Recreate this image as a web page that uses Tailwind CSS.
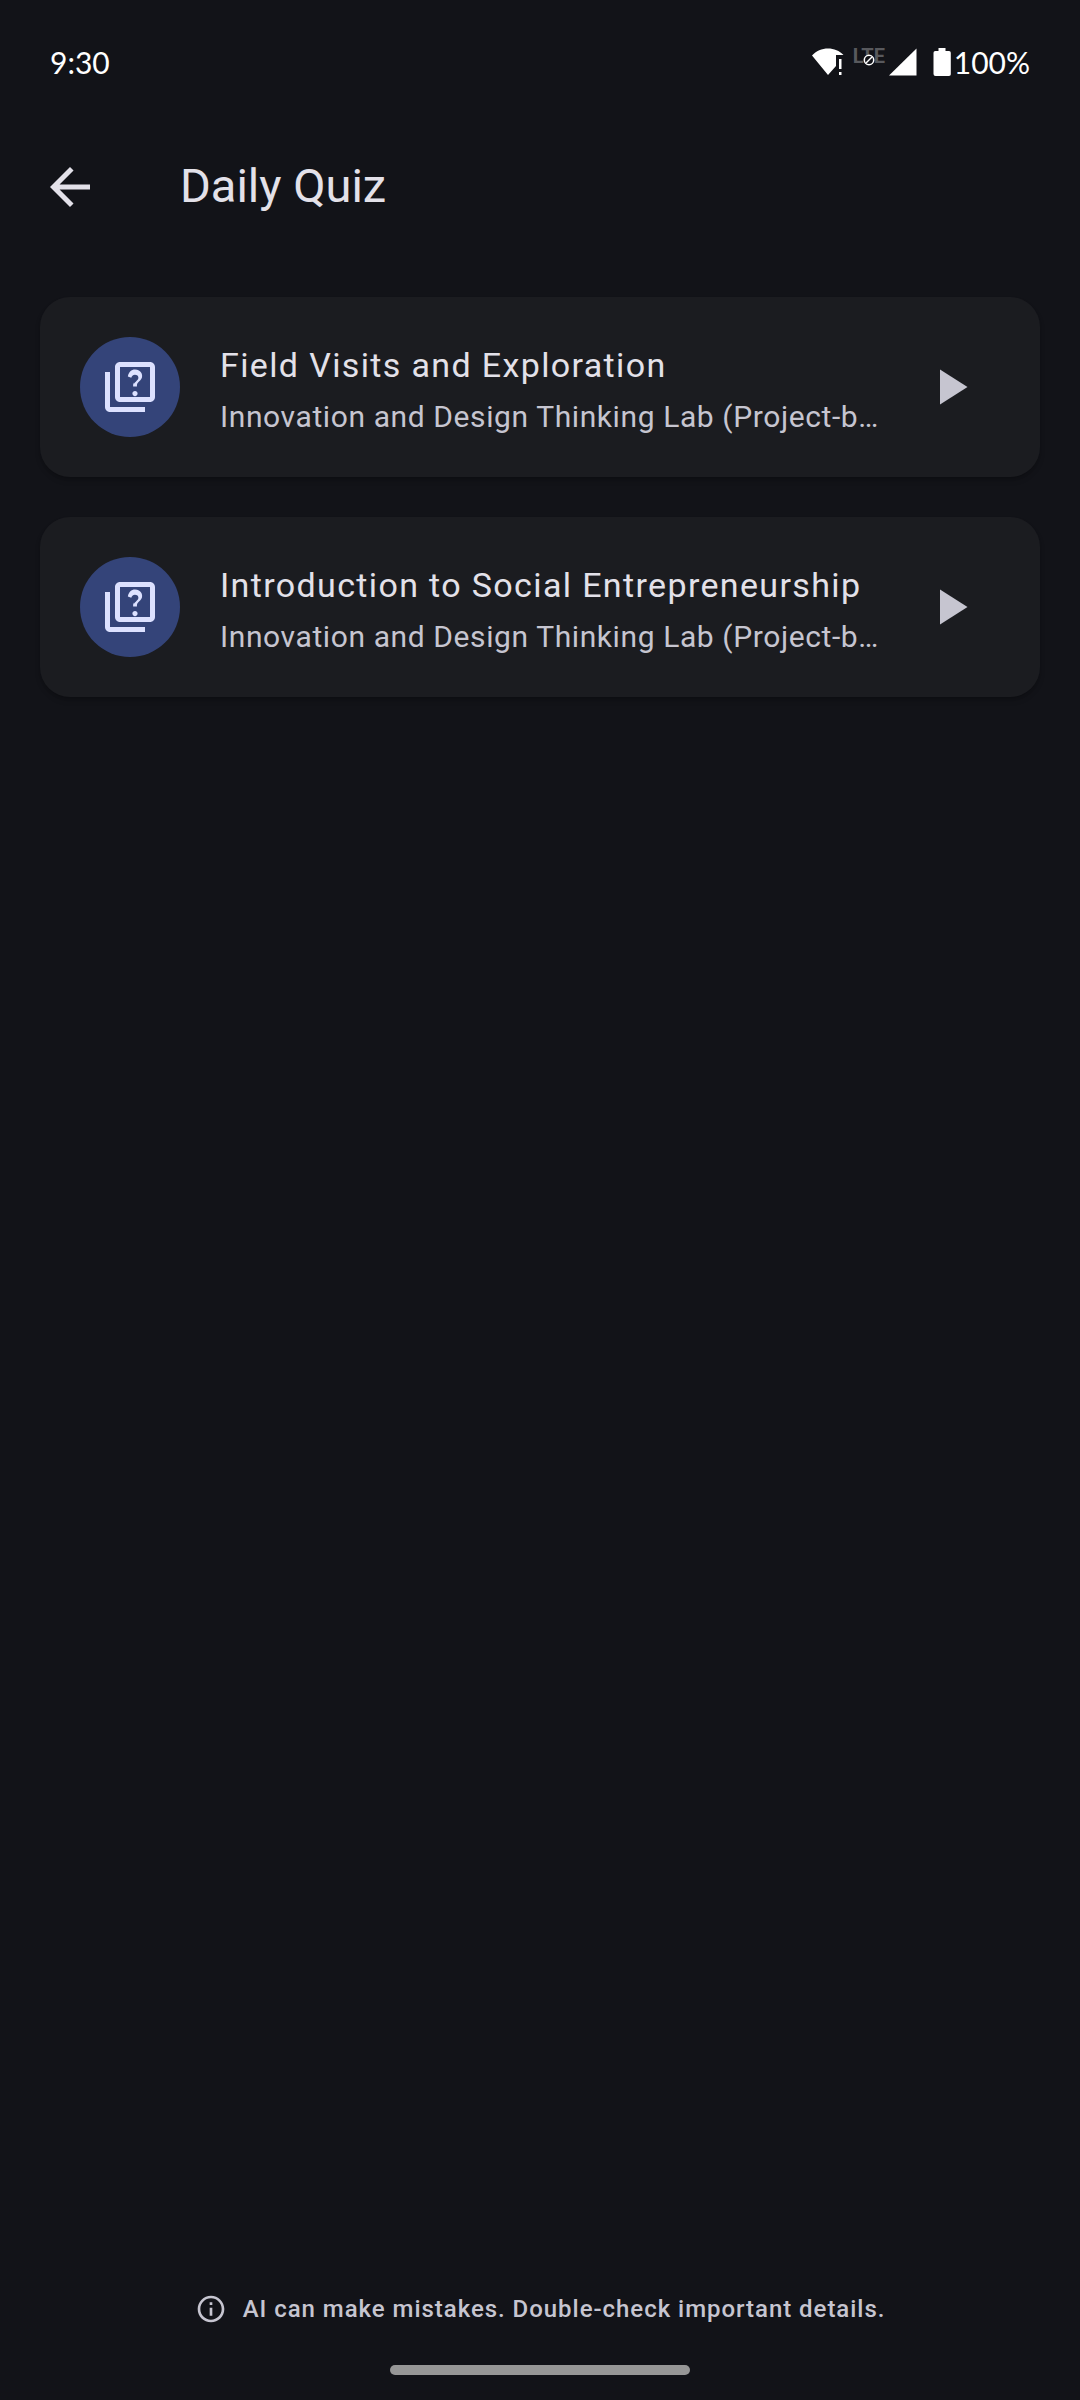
<!DOCTYPE html>
<html lang="en">

<head>
  <meta charset="UTF-8">
  <meta name="viewport" content="width=device-width, initial-scale=1.0">
  <title>Daily Quiz</title>
  <script src="https://cdn.jsdelivr.net/npm/@tailwindcss/browser@4"></script>
</head>

<body class="flex flex-col min-h-screen bg-[#121318] text-[#e3e1e9] font-['Roboto',sans-serif]">
  <!-- Status bar -->
  <div class="flex items-center justify-between h-[124px] px-[50px] text-white text-3xl font-['Lato',sans-serif]">
    <span>9:30</span>
    <div class="flex items-center">
      <svg class="w-8 h-7" viewBox="0 0 32 28" fill="currentColor" aria-label="Wi-Fi, no internet">
        <path d="M0 7.500C4 3 10 .5 16 .5s11.500 2.200 15.500 6.500H24v11L16 27z" />
        <path d="M27 11h2.500v10H27zM27 24h2.500v3H27z" />
      </svg>
      <div class="relative ml-[9px] w-8 h-7 text-xl leading-4 font-bold text-[#58595d] font-['Roboto',sans-serif]">
        <span>LTE</span>
        <svg class="absolute left-[10px] top-[6px] w-3 h-3 text-white" viewBox="0 0 12 12" fill="none" stroke="currentColor" stroke-width="1.500" aria-hidden="true">
          <circle cx="6" cy="6" r="4.700" fill="#121318" />
          <path d="M3 9l6-6" />
        </svg>
      </div>
      <svg class="ml-1 w-7 h-7" viewBox="0 0 28 28" fill="currentColor" aria-label="Signal">
        <path d="M27.500 .5v27H0z" />
      </svg>
      <svg class="ml-4 w-[18px] h-7" viewBox="0 0 18 28" fill="currentColor" aria-label="Battery">
        <path d="M5.500 0h7v3H16a1.800 1.800 0 0 1 1.800 1.800v21A2 2 0 0 1 16 28H2.500a2 2 0 0 1-2-2V4.800A1.800 1.800 0 0 1 2.300 3h3.200z" />
      </svg>
      <span class="ml-[3px]">100%</span>
    </div>
  </div>

  <!-- App bar -->
  <header class="flex items-center gap-20 h-[125px] px-10">
    <button type="button" aria-label="Back">
      <svg class="w-[60px] h-[60px]" viewBox="0 0 24 24" fill="currentColor">
        <path d="M20 11H7.830l5.590-5.590L12 4l-8 8 8 8 1.410-1.410L7.830 13H20v-2z" />
      </svg>
    </button>
    <h1 class="text-[47px]">Daily Quiz</h1>
  </header>

  <!-- Quiz list -->
  <main class="flex-1 px-10 pt-12">
    <ul class="space-y-10">
      <li class="flex items-center min-h-[180px] px-10 py-9 rounded-[30px] bg-[#1b1c20] shadow-md shadow-black/20">
        <div class="flex items-center justify-center shrink-0 w-[100px] h-[100px] rounded-full bg-[#344479] text-[#dce1ff]">
          <svg class="w-[60px] h-[60px]" viewBox="0 0 24 24" fill="currentColor" aria-hidden="true">
            <path d="M4 6H2v14c0 1.100.9 2 2 2h14v-2H4V6zm16-4H8c-1.100 0-2 .9-2 2v12c0 1.100.9 2 2 2h12c1.100 0 2-.9 2-2V4c0-1.100-.9-2-2-2zm0 14H8V4h12v12zm-6.490-5.160c.41-.73 1.180-1.160 1.630-1.800.48-.68.21-1.940-1.140-1.940-.88 0-1.320.67-1.500 1.230l-1.370-.57C11.510 5.960 12.520 5 13.990 5c1.230 0 2.080.56 2.510 1.260.37.6.58 1.730.01 2.570-.63.93-1.230 1.210-1.560 1.810-.13.24-.18.4-.18 1.180h-1.520c.01-.41-.06-1.080.26-1.650zm-.56 3.790c0-.59.47-1.040 1.050-1.040.59 0 1.040.45 1.040 1.040 0 .58-.44 1.050-1.040 1.050-.58 0-1.050-.47-1.050-1.050z" />
          </svg>
        </div>
        <div class="flex-1 min-w-0 ml-10 mr-4 pt-1">
          <h2 class="truncate text-[34px] leading-[52px] tracking-[0.04em]">Field Visits and Exploration</h2>
          <p class="truncate mt-1 text-3xl leading-[44px] tracking-[0.02em] text-[#c6c5d0]">Innovation and Design Thinking Lab (Project-based)</p>
        </div>
        <button type="button" class="flex items-center justify-center shrink-0 w-[100px] h-[100px] text-[#c6c5d0]" aria-label="Start quiz">
          <svg class="w-[60px] h-[60px]" viewBox="0 0 24 24" fill="currentColor">
            <path d="M8 5v14l11-7z" />
          </svg>
        </button>
      </li>
      <li class="flex items-center min-h-[180px] px-10 py-9 rounded-[30px] bg-[#1b1c20] shadow-md shadow-black/20">
        <div class="flex items-center justify-center shrink-0 w-[100px] h-[100px] rounded-full bg-[#344479] text-[#dce1ff]">
          <svg class="w-[60px] h-[60px]" viewBox="0 0 24 24" fill="currentColor" aria-hidden="true">
            <path d="M4 6H2v14c0 1.100.9 2 2 2h14v-2H4V6zm16-4H8c-1.100 0-2 .9-2 2v12c0 1.100.9 2 2 2h12c1.100 0 2-.9 2-2V4c0-1.100-.9-2-2-2zm0 14H8V4h12v12zm-6.490-5.160c.41-.73 1.180-1.160 1.630-1.800.48-.68.21-1.940-1.140-1.940-.88 0-1.320.67-1.500 1.230l-1.370-.57C11.510 5.960 12.520 5 13.990 5c1.230 0 2.080.56 2.510 1.260.37.6.58 1.730.01 2.570-.63.93-1.230 1.210-1.560 1.810-.13.24-.18.4-.18 1.180h-1.520c.01-.41-.06-1.080.26-1.650zm-.56 3.790c0-.59.47-1.040 1.050-1.040.59 0 1.040.45 1.040 1.040 0 .58-.44 1.050-1.040 1.050-.58 0-1.050-.47-1.050-1.050z" />
          </svg>
        </div>
        <div class="flex-1 min-w-0 ml-10 mr-4 pt-1">
          <h2 class="truncate text-[34px] leading-[52px] tracking-[0.04em]">Introduction to Social Entrepreneurship</h2>
          <p class="truncate mt-1 text-3xl leading-[44px] tracking-[0.02em] text-[#c6c5d0]">Innovation and Design Thinking Lab (Project-based)</p>
        </div>
        <button type="button" class="flex items-center justify-center shrink-0 w-[100px] h-[100px] text-[#c6c5d0]" aria-label="Start quiz">
          <svg class="w-[60px] h-[60px]" viewBox="0 0 24 24" fill="currentColor">
            <path d="M8 5v14l11-7z" />
          </svg>
        </button>
      </li>
    </ul>
  </main>

  <!-- Disclaimer and navigation handle -->
  <footer class="flex flex-col items-center pb-[25px]">
    <p class="flex items-center gap-4 text-[#c6c5d0] text-2xl leading-8 font-medium tracking-[0.04em]">
      <svg class="w-8 h-8" viewBox="0 0 24 24" fill="currentColor" aria-hidden="true">
        <path d="M11 7h2v2h-2zm0 4h2v6h-2zm1-9C6.480 2 2 6.480 2 12s4.480 10 10 10 10-4.480 10-10S17.520 2 12 2zm0 18c-4.410 0-8-3.590-8-8s3.590-8 8-8 8 3.590 8 8-3.590 8-8 8z" />
      </svg>
      AI can make mistakes. Double-check important details.
    </p>
    <div class="mt-10 w-[300px] h-[10px] rounded-full bg-[#969696]"></div>
  </footer>
</body>

</html>
